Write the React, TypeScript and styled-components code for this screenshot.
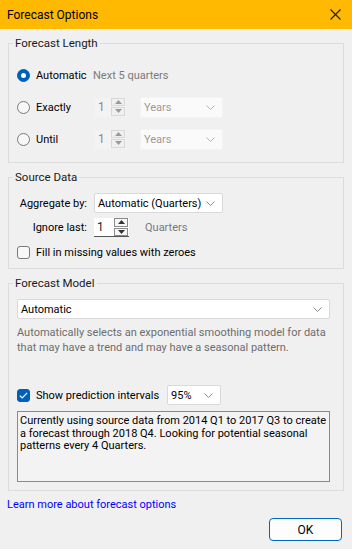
import styled, { createGlobalStyle } from 'styled-components';

const GlobalStyle = createGlobalStyle`
  body {
    margin: 0;
    background: #f0f0f0;
    font-family: Roboto, 'Noto Sans', sans-serif;
    font-size: 11px;
    color: #000;
  }
`;

const Chevron = ({ color = '#8a8a8a' }: { color?: string }) => (
  <svg width="9" height="5" viewBox="0 0 9 5">
    <polyline points="0.5,0.5 4.5,4.5 8.5,0.5" fill="none" stroke={color} strokeWidth="1" />
  </svg>
);

const Radio = ({ checked }: { checked?: boolean }) => (
  <RadioCircle checked={checked}>{checked && <RadioDot />}</RadioCircle>
);

const Checkbox = ({ checked }: { checked?: boolean }) => (
  <CheckBox checked={checked}>
    {checked && (
      <svg width="9" height="7" viewBox="0 0 9 7">
        <polyline points="0.8,3.6 3.2,6 8.2,0.8" fill="none" stroke="#fff" strokeWidth="1.2" />
      </svg>
    )}
  </CheckBox>
);

const Spin = ({ value, disabled }: { value: string; disabled?: boolean }) => (
  <SpinBox disabled={disabled}>
    <SpinValue disabled={disabled}>{value}</SpinValue>
    <SpinButtons disabled={disabled}>
      <SpinButton disabled={disabled}>
        <svg width="7" height="4" viewBox="0 0 7 4">
          <polygon points="0,4 3.5,0 7,4" fill={disabled ? '#9a9a9a' : '#333'} />
        </svg>
      </SpinButton>
      <SpinButton disabled={disabled}>
        <svg width="7" height="4" viewBox="0 0 7 4">
          <polygon points="0,0 3.5,4 7,0" fill={disabled ? '#9a9a9a' : '#333'} />
        </svg>
      </SpinButton>
    </SpinButtons>
  </SpinBox>
);

const App = () => {
  return (
    <>
      <GlobalStyle />
      <Dialog>
        <TitleBar>
          <span>Forecast Options</span>
          <svg width="11" height="11" viewBox="0 0 11 11">
            <path d="M0.5 0.5 L10.5 10.5 M10.5 0.5 L0.5 10.5" stroke="#1a1a1a" strokeWidth="1.1" />
          </svg>
        </TitleBar>
        <Content>
          <Group top={6}>
            <Legend>Forecast Length</Legend>
            <LengthRows>
              <LengthRow>
                <RadioLabel>
                  <Radio checked />
                  Automatic
                </RadioLabel>
                <Hint>Next 5 quarters</Hint>
              </LengthRow>
              <LengthRow>
                <RadioLabel>
                  <Radio />
                  Exactly
                </RadioLabel>
                <Spin value="1" disabled />
                <Select width={83} disabled>
                  Years
                  <Chevron color="#b5b5b5" />
                </Select>
              </LengthRow>
              <LengthRow>
                <RadioLabel>
                  <Radio />
                  Until
                </RadioLabel>
                <Spin value="1" disabled />
                <Select width={83} disabled>
                  Years
                  <Chevron color="#b5b5b5" />
                </Select>
              </LengthRow>
            </LengthRows>
          </Group>

          <Group top={6}>
            <Legend>Source Data</Legend>
            <SourceRows>
              <FieldRow>
                <FieldLabel>Aggregate by:</FieldLabel>
                <Select width={129}>
                  Automatic (Quarters)
                  <Chevron />
                </Select>
              </FieldRow>
              <FieldRow>
                <FieldLabel>Ignore last:</FieldLabel>
                <Spin value="1" />
                <Hint>Quarters</Hint>
              </FieldRow>
              <CheckRow>
                <Checkbox />
                Fill in missing values with zeroes
              </CheckRow>
            </SourceRows>
          </Group>

          <Group top={6}>
            <Legend>Forecast Model</Legend>
            <ModelBody>
              <Select width={313}>
                Automatic
                <Chevron />
              </Select>
              <Description>
                Automatically selects an exponential smoothing model for data that may have a trend and may
                have a seasonal pattern.
              </Description>
              <CheckRow>
                <Checkbox checked />
                Show prediction intervals
                <Select width={54}>
                  95%
                  <Chevron />
                </Select>
              </CheckRow>
              <InfoBox>
                Currently using source data from 2014 Q1 to 2017 Q3 to create a forecast through 2018 Q4.
                Looking for potential seasonal patterns every 4 Quarters.
              </InfoBox>
            </ModelBody>
          </Group>
        </Content>
        <Footer>
          <Link>Learn more about forecast options</Link>
          <Actions>
            <OkButton>OK</OkButton>
          </Actions>
        </Footer>
      </Dialog>
    </>
  );
};
export default App;

const Dialog = styled.div`
  width: 352px;
  height: 549px;
  display: flex;
  flex-direction: column;
  background: #f0f0f0;
  overflow: hidden;
`;

const TitleBar = styled.div`
  height: 29px;
  flex: none;
  background: #ffb900;
  display: flex;
  align-items: center;
  justify-content: space-between;
  padding: 0 11px 0 7px;
  font-size: 12px;
  color: #000;
`;

const Content = styled.div`
  padding: 0 8px;
  display: flex;
  flex-direction: column;
`;

const Group = styled.fieldset<{ top: number }>`
  margin: ${(p) => p.top}px 0 0;
  border: 1px solid #dcdcdc;
  padding: 0 8px;
  min-width: 0;
`;

const Legend = styled.legend`
  margin-left: -4px;
  padding: 0 2px;
  line-height: 16px;
  font-size: 11.5px;
  color: #1a1a1a;
`;

const LengthRows = styled.div`
  display: flex;
  flex-direction: column;
  gap: 10px;
  padding: 13px 0 12px;
`;

const LengthRow = styled.div`
  display: flex;
  align-items: center;
  height: 22px;
`;

const RadioLabel = styled.label`
  width: 76px;
  display: flex;
  align-items: center;
  gap: 6px;
`;

const RadioCircle = styled.span<{ checked?: boolean }>`
  width: 13px;
  height: 13px;
  box-sizing: border-box;
  border-radius: 50%;
  display: flex;
  align-items: center;
  justify-content: center;
  background: ${(p) => (p.checked ? '#005fb8' : '#f7f7f7')};
  border: 1px solid ${(p) => (p.checked ? '#005fb8' : '#7a7a7a')};
`;

const RadioDot = styled.span`
  width: 5px;
  height: 5px;
  border-radius: 50%;
  background: #fff;
`;

const Hint = styled.span`
  color: #7a7a7a;
  margin-left: 9px;

  ${LengthRow} & {
    margin-left: 0;
  }
`;

const SpinBox = styled.div<{ disabled?: boolean }>`
  width: ${(p) => (p.disabled ? 31 : 35)}px;
  height: 19px;
  margin-left: ${(p) => (p.disabled ? 2 : 0)}px;
  box-sizing: border-box;
  display: flex;
  align-items: stretch;
  background: ${(p) => (p.disabled ? '#f3f3f3' : '#fff')};
  border-bottom: 1px solid ${(p) => (p.disabled ? 'transparent' : '#555')};
`;

const SpinValue = styled.span<{ disabled?: boolean }>`
  flex: 1;
  padding-left: 3px;
  display: flex;
  align-items: center;
  font-size: 12px;
  color: ${(p) => (p.disabled ? '#8a8a8a' : '#1a1a1a')};
`;

const SpinButtons = styled.div<{ disabled?: boolean }>`
  width: 14px;
  display: flex;
  flex-direction: column;
  gap: 1px;
  padding: 0 1px 0 0;
`;

const SpinButton = styled.div<{ disabled?: boolean }>`
  flex: 1;
  display: flex;
  align-items: center;
  justify-content: center;
  box-sizing: border-box;
  border: 1px solid ${(p) => (p.disabled ? '#d8d8d8' : '#8a8a8a')};
  background: ${(p) => (p.disabled ? '#f0f0f0' : '#f7f7f7')};
`;

const Select = styled.div<{ width: number; disabled?: boolean }>`
  width: ${(p) => p.width}px;
  height: ${(p) => (p.disabled ? 21 : 20)}px;
  box-sizing: border-box;
  margin-left: ${(p) => (p.disabled ? 14 : 0)}px;
  display: flex;
  align-items: center;
  justify-content: space-between;
  padding: 0 7px 0 3px;
  background: ${(p) => (p.disabled ? '#fafafa' : '#fff')};
  border: 1px solid ${(p) => (p.disabled ? '#f4f4f4' : '#d9d9d9')};
  border-radius: 2px;
  color: ${(p) => (p.disabled ? '#9a9a9a' : '#000')};
  white-space: nowrap;
`;

const SourceRows = styled.div`
  display: flex;
  flex-direction: column;
  gap: 5px;
  padding: 8px 0 6px;
`;

const FieldRow = styled.div`
  display: flex;
  align-items: center;
  gap: 7px;
`;

const FieldLabel = styled.span`
  width: 70px;
  text-align: right;
  white-space: nowrap;
`;

const CheckRow = styled.label`
  display: flex;
  align-items: center;
  gap: 6px;
  height: 20px;

  & > ${Select} {
    margin-left: 2px;
  }
`;

const CheckBox = styled.span<{ checked?: boolean }>`
  width: 13px;
  height: 13px;
  box-sizing: border-box;
  border-radius: 3px;
  display: flex;
  align-items: center;
  justify-content: center;
  background: ${(p) => (p.checked ? '#005fb8' : '#f7f7f7')};
  border: 1px solid ${(p) => (p.checked ? '#005fb8' : '#7a7a7a')};
`;

const ModelBody = styled.div`
  display: flex;
  flex-direction: column;
  padding: 8px 5px 8px 0;
`;

const Description = styled.p`
  margin: 6px -5px 30px 0;
  color: #6d6d6d;
  line-height: 15px;
`;

const InfoBox = styled.div`
  margin-top: 6px;
  height: 71px;
  box-sizing: border-box;
  border: 1px solid #8a8a8a;
  background: #f3f3f3;
  padding: 3px 2px;
  line-height: 12.7px;
  color: #000;
`;

const Footer = styled.div`
  display: flex;
  flex-direction: column;
  padding: 6px 10px 0 7px;
`;

const Link = styled.a`
  color: #0000ff;
  line-height: 16px;
  cursor: pointer;
`;

const Actions = styled.div`
  display: flex;
  justify-content: flex-end;
  margin-top: 5px;
`;

const OkButton = styled.button`
  width: 73px;
  height: 23px;
  border: 1.5px solid #0067c0;
  border-radius: 4px;
  background: #fdfdfd;
  font-family: inherit;
  font-size: 12px;
  color: #000;
  padding: 0;
`;
